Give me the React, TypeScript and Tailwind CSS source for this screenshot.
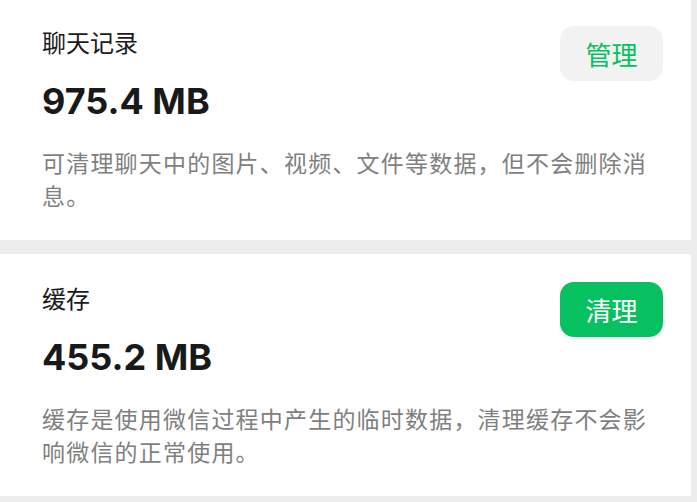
import React from 'react';

type StorageItem = {
  title: string;
  size: string;
  desc: string;
  action: string;
  primary: boolean;
};

const items: StorageItem[] = [
  {
    title: '聊天记录',
    size: '975.4 MB',
    desc: '可清理聊天中的图片、视频、文件等数据，但不会删除消息。',
    action: '管理',
    primary: false,
  },
  {
    title: '缓存',
    size: '455.2 MB',
    desc: '缓存是使用微信过程中产生的临时数据，清理缓存不会影响微信的正常使用。',
    action: '清理',
    primary: true,
  },
];

const StorageCard: React.FC<{ item: StorageItem; first?: boolean }> = ({ item, first }) => (
  <div
    className={`w-[691px] h-[242px] bg-white pl-[42px] pr-[28px] pt-[28px] font-['Noto_Sans_CJK_SC','Noto_Sans',sans-serif] ${
      first ? 'mt-[-2px]' : 'mt-[14px]'
    }`}
  >
    <div className="flex items-start justify-between">
      <div>
        <div className="text-[24px] leading-[32px] text-[#1a1a1a]">{item.title}</div>
        <div className="mt-[21px] text-[36px] leading-[44px] font-bold text-[#191919] font-['Inter','Liberation_Sans',sans-serif]">
          {item.size}
        </div>
      </div>
      <button
        type="button"
        className={`w-[103px] h-[55px] rounded-[14px] text-[26px] ${
          item.primary ? 'bg-[#07c160] text-white' : 'bg-[#f2f2f2] text-[#07c160]'
        }`}
      >
        {item.action}
      </button>
    </div>
    <p className="mt-[23px] text-[23px] leading-[33px] tracking-[1.2px] text-[#7f7f7f]">
      {item.desc}
    </p>
  </div>
);

export default function App() {
  return (
    <div className="w-[697px] h-[502px] bg-[#ededed] overflow-hidden">
      {items.map((item, i) => (
        <StorageCard key={item.title} item={item} first={i === 0} />
      ))}
    </div>
  );
}
